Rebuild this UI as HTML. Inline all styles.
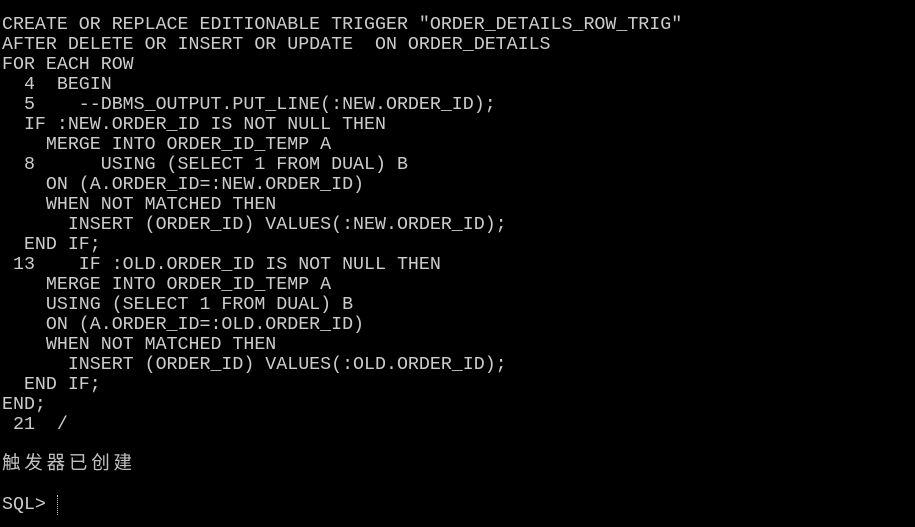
<!DOCTYPE html>
<html><head><meta charset="utf-8"><style>
html,body{margin:0;padding:0;background:#000;width:915px;height:527px;overflow:hidden}
pre{position:absolute;left:2px;top:15px;margin:0;font-family:"Liberation Mono",monospace;font-size:18.3px;line-height:20px;color:#cccccc;white-space:pre}
.cjk{font-family:"Liberation Mono","Noto Sans CJK SC",sans-serif;font-size:18.5px;letter-spacing:3.8px;color:#c0c0c0}
.cur{position:absolute;left:57px;top:495px;width:0;height:20px;border-left:1px dotted #bbb}
</style></head><body>
<pre>CREATE OR REPLACE EDITIONABLE TRIGGER "ORDER_DETAILS_ROW_TRIG"
AFTER DELETE OR INSERT OR UPDATE  ON ORDER_DETAILS
FOR EACH ROW
  4  BEGIN
  5    --DBMS_OUTPUT.PUT_LINE(:NEW.ORDER_ID);
  IF :NEW.ORDER_ID IS NOT NULL THEN
    MERGE INTO ORDER_ID_TEMP A
  8      USING (SELECT 1 FROM DUAL) B
    ON (A.ORDER_ID=:NEW.ORDER_ID)
    WHEN NOT MATCHED THEN
      INSERT (ORDER_ID) VALUES(:NEW.ORDER_ID);
  END IF;
 13    IF :OLD.ORDER_ID IS NOT NULL THEN
    MERGE INTO ORDER_ID_TEMP A
    USING (SELECT 1 FROM DUAL) B
    ON (A.ORDER_ID=:OLD.ORDER_ID)
    WHEN NOT MATCHED THEN
      INSERT (ORDER_ID) VALUES(:OLD.ORDER_ID);
  END IF;
END;
 21  /

<span class="cjk">触发器已创建</span>

SQL&gt;</pre>
<div class="cur"></div>
</body></html>
